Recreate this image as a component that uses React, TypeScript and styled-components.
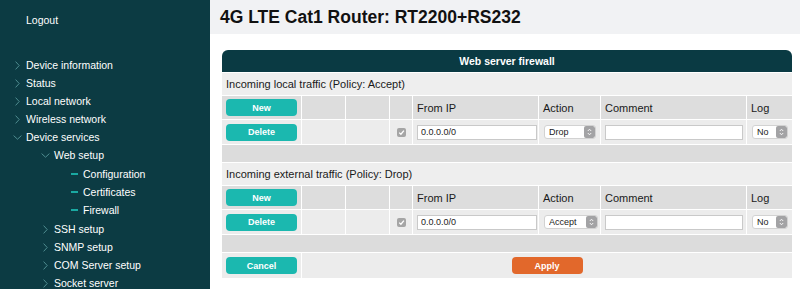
import React from "react";
import styled, { createGlobalStyle } from "styled-components";

const Global = createGlobalStyle`
  html, body { margin: 0; padding: 0; background: #ffffff; }
  body { font-family: "Liberation Sans", Arial, Helvetica, sans-serif; }
  * { box-sizing: border-box; }
`;

const COLS = "79px 43px 43px 22px 125px 61px 145px 45px";

const Layout = styled.div`
  display: grid;
  grid-template-columns: 210px 1fr;
  width: 800px;
  height: 289px;
  overflow: hidden;
`;

const Sidebar = styled.nav`
  background: #0c3b43;
  color: #ffffff;
  padding-top: 11px;
  font-size: 10.5px;
`;

const Logout = styled.div`
  height: 18px;
  line-height: 18px;
  padding-left: 26px;
  margin-bottom: 27px;
`;

const MenuList = styled.ul<{ $sub?: boolean }>`
  list-style: none;
  margin: ${(p) => (p.$sub ? "1px 0" : "0")};
  padding: 0;
`;

const MenuItem = styled.li<{ $indent: number }>`
  display: flex;
  align-items: center;
  height: 18px;
  padding-left: ${(p) => p.$indent}px;
  white-space: nowrap;
`;

const Marker = styled.span<{ $w: number }>`
  display: inline-flex;
  align-items: center;
  width: ${(p) => p.$w}px;
  flex: none;
`;

const Dash = styled.span`
  display: block;
  width: 7px;
  height: 1.5px;
  background: #1aa9a2;
`;

const Main = styled.main`
  display: flex;
  flex-direction: column;
  min-width: 0;
`;

const TopBar = styled.header`
  height: 34px;
  background: #f1f2f4;
  display: flex;
  align-items: center;
  padding-left: 10px;
`;

const Title = styled.h1`
  margin: 0;
  font-size: 17.5px;
  font-weight: bold;
  color: #111111;
`;

const Content = styled.div`
  padding: 16px 8px 0 12px;
`;

const Panel = styled.section`
  width: 570px;
  background: #ffffff;
`;

const PanelHead = styled.div`
  height: 22px;
  background: #0a3a43;
  border-radius: 6px 6px 0 0;
  color: #ffffff;
  font-weight: bold;
  font-size: 10.5px;
  display: flex;
  align-items: center;
  justify-content: center;
`;

const SectionTitle = styled.div`
  margin-top: 1px;
  height: 22px;
  background: #eeeeee;
  color: #1a1a1a;
  font-size: 11px;
  display: flex;
  align-items: center;
  padding-left: 4px;
`;

const Row = styled.div<{ $h: number }>`
  display: grid;
  grid-template-columns: ${COLS};
  column-gap: 1px;
  margin-top: 1px;
  height: ${(p) => p.$h}px;
`;

const Cell = styled.div<{ $tone: "head" | "body"; $center?: boolean }>`
  background: ${(p) => (p.$tone === "head" ? "#dddddd" : "#ececec")};
  display: flex;
  align-items: center;
  justify-content: ${(p) => (p.$center ? "center" : "flex-start")};
  padding-left: ${(p) => (p.$center ? 0 : 4)}px;
  font-size: 11px;
  color: #1a1a1a;
  min-width: 0;
`;

const Spacer = styled.div`
  margin-top: 1px;
  height: 17px;
  background: #dcdcdc;
`;

const FootRow = styled.div`
  display: grid;
  grid-template-columns: 79px 1fr;
  column-gap: 1px;
  margin-top: 1px;
  height: 25px;
`;

const FootCell = styled.div`
  background: #ececec;
  display: flex;
  align-items: center;
  justify-content: center;
`;

const Btn = styled.button<{ $variant?: "teal" | "orange" }>`
  width: 71px;
  height: 17px;
  border: none;
  border-radius: 4px;
  background: ${(p) => (p.$variant === "orange" ? "#e2682b" : "#1bb8af")};
  color: #ffffff;
  font-family: "Liberation Sans", Arial, sans-serif;
  font-weight: bold;
  font-size: 9px;
  padding: 0;
`;

const TextInput = styled.input<{ $w: number }>`
  width: ${(p) => p.$w}px;
  height: 15px;
  border: 1px solid #c9c9c9;
  background: #ffffff;
  font-family: "Liberation Sans", Arial, sans-serif;
  font-size: 9px;
  color: #222222;
  padding: 0 3px;
  outline: none;
`;

const SelectWrap = styled.div<{ $w: number; $ml: number }>`
  display: flex;
  align-items: stretch;
  width: ${(p) => p.$w}px;
  height: 14px;
  margin-left: ${(p) => p.$ml}px;
  background: #ffffff;
  border: 1px solid #d2d2d2;
  border-radius: 3px;
  overflow: hidden;
`;

const NativeSelect = styled.select`
  appearance: none;
  -webkit-appearance: none;
  border: none;
  background: transparent;
  flex: 1;
  min-width: 0;
  font-family: "Liberation Sans", Arial, sans-serif;
  font-size: 9px;
  color: #222222;
  padding: 0 0 0 4px;
  outline: none;
`;

const Stepper = styled.span`
  width: 11px;
  flex: none;
  background: #a3a3a5;
  border-radius: 2px;
  display: flex;
  align-items: center;
  justify-content: center;
`;

const CheckBox = styled.span`
  width: 9px;
  height: 9px;
  border-radius: 2px;
  background: #a5a5a5;
  display: flex;
  align-items: center;
  justify-content: center;
`;

const ChevronRight = () => (
  <svg width="5" height="9" viewBox="0 0 5 9">
    <path d="M0.6 0.6 L4.2 4.5 L0.6 8.4" fill="none" stroke="#4f8c90" strokeWidth="1" />
  </svg>
);

const ChevronDown = () => (
  <svg width="9" height="5" viewBox="0 0 9 5">
    <path d="M0.6 0.6 L4.5 4.2 L8.4 0.6" fill="none" stroke="#4f8c90" strokeWidth="1" />
  </svg>
);

const StepIcon = () => (
  <svg width="5" height="8" viewBox="0 0 5 8">
    <path d="M0.8 3 L2.5 1.2 L4.2 3 M0.8 5 L2.5 6.8 L4.2 5" fill="none" stroke="#ffffff" strokeWidth="0.9" />
  </svg>
);

const Check = () => (
  <svg width="7" height="7" viewBox="0 0 7 7">
    <path d="M1.2 3.6 L2.9 5.2 L5.9 1.6" fill="none" stroke="#ffffff" strokeWidth="1.3" />
  </svg>
);

type Item = { label: string; level: 0 | 1 | 2; open?: boolean };

const topItems: Item[] = [
  { label: "Device information", level: 0 },
  { label: "Status", level: 0 },
  { label: "Local network", level: 0 },
  { label: "Wireless network", level: 0 },
  { label: "Device services", level: 0, open: true },
];

const subItems: Item[] = [
  { label: "Configuration", level: 2 },
  { label: "Certificates", level: 2 },
  { label: "Firewall", level: 2 },
];

const afterItems: Item[] = [
  { label: "SSH setup", level: 1 },
  { label: "SNMP setup", level: 1 },
  { label: "COM Server setup", level: 1 },
  { label: "Socket server", level: 1 },
];

const indentFor = (level: number) => (level === 0 ? 15 : level === 1 ? 43 : 71);

const NavEntry = ({ item }: { item: Item }) => (
  <MenuItem $indent={item.open ? indentFor(item.level) - 2 : indentFor(item.level)}>
    {item.level === 2 ? (
      <Marker $w={12}>
        <Dash />
      </Marker>
    ) : (
      <Marker $w={item.open ? 13 : 11}>{item.open ? <ChevronDown /> : <ChevronRight />}</Marker>
    )}
    <span>{item.label}</span>
  </MenuItem>
);

const Select = ({ value, options, w, ml }: { value: string; options: string[]; w: number; ml: number }) => (
  <SelectWrap $w={w} $ml={ml}>
    <NativeSelect defaultValue={value}>
      {options.map((o) => (
        <option key={o}>{o}</option>
      ))}
    </NativeSelect>
    <Stepper>
      <StepIcon />
    </Stepper>
  </SelectWrap>
);

const RuleBlock = ({ title, action }: { title: string; action: string }) => (
  <>
    <SectionTitle>{title}</SectionTitle>
    <Row $h={23}>
      <Cell $tone="head" $center>
        <Btn>New</Btn>
      </Cell>
      <Cell $tone="head" />
      <Cell $tone="head" />
      <Cell $tone="head" />
      <Cell $tone="head">From IP</Cell>
      <Cell $tone="head">Action</Cell>
      <Cell $tone="head">Comment</Cell>
      <Cell $tone="head">Log</Cell>
    </Row>
    <Row $h={24}>
      <Cell $tone="body" $center>
        <Btn>Delete</Btn>
      </Cell>
      <Cell $tone="body" />
      <Cell $tone="body" />
      <Cell $tone="body" $center>
        <CheckBox>
          <Check />
        </CheckBox>
      </Cell>
      <Cell $tone="body">
        <TextInput $w={120} defaultValue="0.0.0.0/0" />
      </Cell>
      <Cell $tone="body">
        <Select value={action} options={["Accept", "Drop"]} w={action === "Accept" ? 54 : 52} ml={1} />
      </Cell>
      <Cell $tone="body">
        <TextInput $w={138} defaultValue="" />
      </Cell>
      <Cell $tone="body">
        <Select value="No" options={["No", "Yes"]} w={36} ml={1} />
      </Cell>
    </Row>
    <Spacer />
  </>
);

export default function App() {
  return (
    <Layout>
      <Global />
      <Sidebar>
        <Logout>Logout</Logout>
        <MenuList>
          {topItems.map((it) => (
            <NavEntry key={it.label} item={it} />
          ))}
          <NavEntry item={{ label: "Web setup", level: 1, open: true }} />
          <MenuList $sub>
            {subItems.map((it) => (
              <NavEntry key={it.label} item={it} />
            ))}
          </MenuList>
          {afterItems.map((it) => (
            <NavEntry key={it.label} item={it} />
          ))}
        </MenuList>
      </Sidebar>
      <Main>
        <TopBar>
          <Title>4G LTE Cat1 Router: RT2200+RS232</Title>
        </TopBar>
        <Content>
          <Panel>
            <PanelHead>Web server firewall</PanelHead>
            <RuleBlock title="Incoming local traffic (Policy: Accept)" action="Drop" />
            <RuleBlock title="Incoming external traffic (Policy: Drop)" action="Accept" />
            <FootRow>
              <FootCell>
                <Btn>Cancel</Btn>
              </FootCell>
              <FootCell>
                <Btn $variant="orange">Apply</Btn>
              </FootCell>
            </FootRow>
          </Panel>
        </Content>
      </Main>
    </Layout>
  );
}
